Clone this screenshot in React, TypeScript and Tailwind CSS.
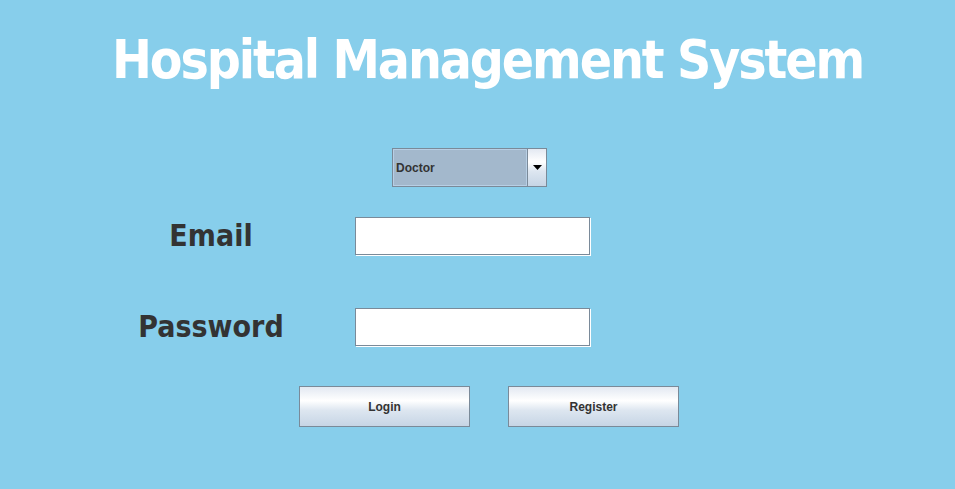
import React from "react";

const btnGrad =
  "bg-[linear-gradient(to_bottom,#e3e9f2_0%,#ffffff_35%,#dde6f0_60%,#c6d5e5_100%)]";

function Field() {
  return (
    <div className="w-[235px] h-[38px] bg-white border border-[#7a8a99] shadow-[1px_1px_0_#ffffff]" />
  );
}

function Button({ label }: { label: string }) {
  return (
    <div
      className={`w-[171px] h-[41px] border border-[#7a8a99] ${btnGrad} flex items-center justify-center text-[12px] font-bold text-[#333333]`}
      style={{ fontFamily: '"Liberation Sans", Arial, sans-serif' }}
    >
      {label}
    </div>
  );
}

export default function App() {
  const tahoma = { fontFamily: '"DejaVu Sans", Verdana, sans-serif' };
  return (
    <div className="w-[955px] h-[489px] bg-[#87ceeb] overflow-hidden flex flex-col">
      <div
        className="pt-[28px] pl-[20px] text-center text-white font-bold font-stretch-condensed text-[53px] leading-[64px] tracking-[-2.1px]"
        style={tahoma}
      >
        Hospital Management System
      </div>

      <div className="mt-[56px] ml-[392px] flex w-[155px] h-[39px] border border-[#7a8a99]">
        <div
          className="flex-1 bg-[#a3b8cc] border border-[#b8cfe5] flex items-center pl-[2px] text-[12px] font-bold text-[#333333]"
          style={{ fontFamily: '"Liberation Sans", Arial, sans-serif' }}
        >
          Doctor
        </div>
        <div className={`w-[19px] border-l border-[#7a8a99] ${btnGrad} flex items-center justify-center`}>
          <svg width="9" height="5" viewBox="0 0 9 5">
            <path d="M0 0H9L4.5 5Z" fill="#000" />
          </svg>
        </div>
      </div>

      <div className="mt-[30px] flex items-center">
        <div
          className="ml-[110px] w-[202px] text-center text-[30px] font-bold font-stretch-condensed text-[#333333] leading-none"
          style={tahoma}
        >
          Email
        </div>
        <div className="ml-[43px]">
          <Field />
        </div>
      </div>

      <div className="mt-[53px] flex items-center">
        <div
          className="ml-[110px] w-[202px] text-center text-[30px] font-bold font-stretch-condensed text-[#333333] leading-none"
          style={tahoma}
        >
          Password
        </div>
        <div className="ml-[43px]">
          <Field />
        </div>
      </div>

      <div className="mt-[40px] ml-[299px] flex gap-[38px]">
        <Button label="Login" />
        <Button label="Register" />
      </div>
    </div>
  );
}
